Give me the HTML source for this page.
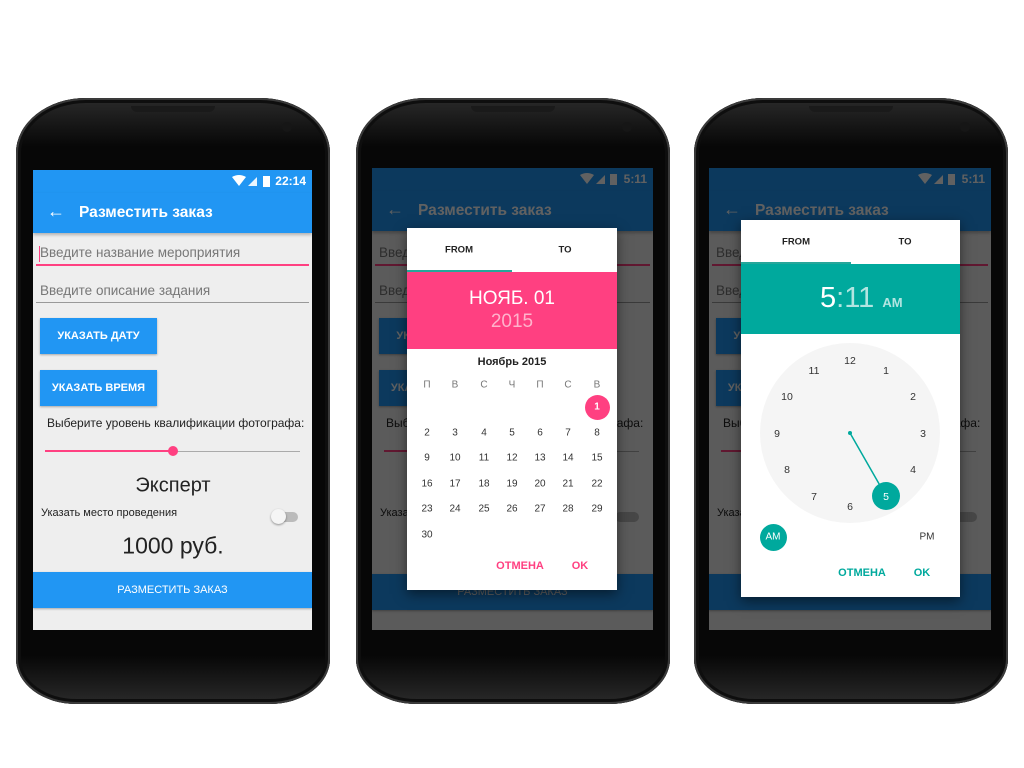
<!DOCTYPE html>
<html><head><meta charset="utf-8"><style>
*{margin:0;padding:0;box-sizing:border-box}
body{width:1024px;height:768px;background:#fff;position:relative;overflow:hidden;font-family:"Liberation Sans","DejaVu Sans",sans-serif}
.ph{position:absolute;top:98px;width:314px;height:606px;border-radius:70px 70px 60px 60px/55px 55px 45px 45px;background:linear-gradient(#2a2a2a,#070707 8%,#070707 92%,#2a2a2a);box-shadow:inset 0 0 0 2px #3a3a3a,inset 0 0 0 5px #0e0e0e}
.ph .grill{position:absolute;top:8px;left:115px;width:84px;height:6px;background:#1a1a1a;border-radius:0 0 6px 6px}
.ph .cam{position:absolute;top:24px;right:38px;width:10px;height:10px;border-radius:50%;background:#161616}
.sc{position:absolute;overflow:hidden;background:#eee}
.sb{position:absolute;left:0;top:0;right:0;height:23px;background:#1e8ee0}
.sb .t{position:absolute;right:6px;top:4px;color:#fff;font-size:12px;font-weight:bold}
.ab{position:absolute;left:0;top:23px;right:0;height:40px;background:#2196f3;box-shadow:0 2px 3px rgba(0,0,0,.25)}
.ab .ar{position:absolute;left:14px;top:8px;color:#fff;font-size:18px}
.ab .ti{position:absolute;left:46px;top:11px;color:#fff;font-size:15.5px;font-weight:bold}
.a{position:absolute;white-space:nowrap}
.btn{position:absolute;background:#2196f3;color:#fff;font-size:11px;font-weight:bold;text-align:center;box-shadow:0 1px 2px rgba(0,0,0,.3)}
.dim{position:absolute;left:0;top:0;width:300px;height:470px;background:rgba(0,0,0,.62);z-index:5}
.dlg{position:absolute;background:#fff;box-shadow:0 4px 12px rgba(0,0,0,.5);z-index:10}
.c{position:absolute;transform:translate(-50%,-50%);white-space:nowrap}
</style></head><body>

<!-- PHONE 1 -->
<div class="ph" style="left:16px"><div class="grill"></div><div class="cam"></div></div>
<div class="sc" style="left:33px;top:170px;width:279px;height:460px">
 <div class="sb" style="background:#2196f3"><svg style="position:absolute;left:199px;top:5px" width="40" height="13"><path d="M0 2 Q7 -2 14 2 L7 11Z" fill="#fff"/><path d="M16 11 L25 2 L25 11Z" fill="#fff" opacity=".9"/><rect x="31" y="1" width="7" height="11" fill="#fff"/></svg><div class="t">22:14</div></div>
 <div class="ab"><div class="ar">←</div><div class="ti">Разместить заказ</div></div>
 <div class="a" style="left:7px;top:75px;font-size:13.5px;color:#777">Введите название мероприятия</div>
 <div class="a" style="left:6px;top:76px;width:1px;height:16px;background:#ff4081"></div>
 <div class="a" style="left:3px;top:94px;width:273px;height:2px;background:#ff4081"></div>
 <div class="a" style="left:7px;top:113px;font-size:13.5px;color:#777">Введите описание задания</div>
 <div class="a" style="left:3px;top:132px;width:273px;height:1px;background:#999"></div>
 <div class="btn" style="left:7px;top:148px;width:117px;height:36px;line-height:36px">УКАЗАТЬ ДАТУ</div>
 <div class="btn" style="left:7px;top:200px;width:117px;height:36px;line-height:36px">УКАЗАТЬ ВРЕМЯ</div>
 <div class="a" style="left:14px;top:246px;font-size:12px;color:#222">Выберите уровень квалификации фотографа:</div>
 <div class="a" style="left:12px;top:280px;width:127px;height:2px;background:#ff4081"></div>
 <div class="a" style="left:139px;top:281px;width:128px;height:1px;background:#aaa"></div>
 <div class="a" style="left:135px;top:276px;width:10px;height:10px;border-radius:50%;background:#ff4081"></div>
 <div class="c" style="left:140px;top:316px;font-size:20px;color:#222">Эксперт</div>
 <div class="a" style="left:8px;top:337px;font-size:11px;color:#222">Указать место проведения</div>
 <div class="a" style="left:241px;top:342px;width:24px;height:10px;border-radius:5px;background:#bbb"></div>
 <div class="a" style="left:238px;top:339px;width:15px;height:15px;border-radius:50%;background:#f5f5f5;box-shadow:0 1px 2px rgba(0,0,0,.4)"></div>
 <div class="c" style="left:140px;top:376px;font-size:23px;color:#222">1000 руб.</div>
 <div class="btn" style="left:0;top:402px;width:279px;height:36px;line-height:36px;font-weight:normal">РАЗМЕСТИТЬ ЗАКАЗ</div>
</div>

<!-- PHONE 2 -->
<div class="ph" style="left:356px"><div class="grill"></div><div class="cam"></div></div>
<div class="sc" style="left:372px;top:168px;width:281px;height:462px">
 <div class="sb" style="background:#2196f3"><svg style="position:absolute;left:208px;top:5px" width="40" height="13"><path d="M0 2 Q7 -2 14 2 L7 11Z" fill="#fff"/><path d="M16 11 L25 2 L25 11Z" fill="#fff"/><rect x="30" y="1" width="7" height="11" fill="#fff"/></svg><div class="t">5:11</div></div>
 <div class="ab"><div class="ar">←</div><div class="ti">Разместить заказ</div></div>
 <div class="a" style="left:7px;top:77px;font-size:13.5px;color:#777">Введите название мероприятия</div>
 <div class="a" style="left:3px;top:96px;width:275px;height:2px;background:#ff4081"></div>
 <div class="a" style="left:7px;top:115px;font-size:13.5px;color:#777">Введите описание задания</div>
 <div class="a" style="left:3px;top:134px;width:275px;height:1px;background:#999"></div>
 <div class="btn" style="left:7px;top:150px;width:117px;height:36px;line-height:36px">УКАЗАТЬ ДАТУ</div>
 <div class="btn" style="left:7px;top:202px;width:117px;height:36px;line-height:36px">УКАЗАТЬ ВРЕМЯ</div>
 <div class="a" style="left:14px;top:248px;font-size:12px;color:#222">Выберите уровень квалификации фотографа:</div>
 <div class="a" style="left:12px;top:282px;width:127px;height:2px;background:#ff4081"></div>
 <div class="a" style="left:139px;top:283px;width:128px;height:1px;background:#aaa"></div>
 <div class="a" style="left:8px;top:339px;font-size:11px;color:#222">Указать место проведения</div>
 <div class="a" style="left:243px;top:344px;width:24px;height:10px;border-radius:5px;background:#bbb"></div>
 <div class="btn" style="left:0;top:406px;width:281px;height:36px;line-height:36px;font-weight:normal">РАЗМЕСТИТЬ ЗАКАЗ</div>
 <div class="dim"></div>
</div>
<div class="dlg" style="left:407px;top:228px;width:210px;height:362px">
 <div class="c" style="left:52px;top:22px;font-size:9.5px;font-weight:bold;color:#222">FROM</div>
 <div class="c" style="left:158px;top:22px;font-size:9.5px;font-weight:bold;color:#222">TO</div>
 <div class="a" style="left:0;top:42px;width:105px;height:2px;background:#26a69a"></div>
 <div class="a" style="left:0;top:44px;width:210px;height:77px;background:#ff4081"></div>
 <div class="c" style="left:105px;top:71px;font-size:19px;color:#fff">НОЯБ. 01</div>
 <div class="c" style="left:105px;top:94px;font-size:19px;color:#ffb3cc">2015</div>
 <div class="c" style="left:105px;top:134px;font-size:11px;font-weight:bold;color:#222">Ноябрь 2015</div>
 <div class="a" style="left:178px;top:167px;width:25px;height:25px;border-radius:50%;background:#ff4081"></div>
 <div class="c" style="left:113px;top:338px;font-size:11px;font-weight:bold;color:#ff4081">ОТМЕНА</div>
 <div class="c" style="left:173px;top:338px;font-size:11px;font-weight:bold;color:#ff4081">OK</div>
 <div style="position:absolute;left:0;top:0">
  <div class="c" style="left:20px;top:157px;font-size:10px;color:#777">П</div><div class="c" style="left:48px;top:157px;font-size:10px;color:#777">В</div><div class="c" style="left:77px;top:157px;font-size:10px;color:#777">С</div><div class="c" style="left:105px;top:157px;font-size:10px;color:#777">Ч</div><div class="c" style="left:133px;top:157px;font-size:10px;color:#777">П</div><div class="c" style="left:161px;top:157px;font-size:10px;color:#777">С</div><div class="c" style="left:190px;top:157px;font-size:10px;color:#777">В</div>
  <div class="c" style="left:190px;top:179px;font-size:10px;color:#fff;font-weight:bold">1</div>
  <div style="font-size:10px;color:#333">
  <div class="c" style="left:20px;top:205px">2</div><div class="c" style="left:48px;top:205px">3</div><div class="c" style="left:77px;top:205px">4</div><div class="c" style="left:105px;top:205px">5</div><div class="c" style="left:133px;top:205px">6</div><div class="c" style="left:161px;top:205px">7</div><div class="c" style="left:190px;top:205px">8</div>
  <div class="c" style="left:20px;top:230px">9</div><div class="c" style="left:48px;top:230px">10</div><div class="c" style="left:77px;top:230px">11</div><div class="c" style="left:105px;top:230px">12</div><div class="c" style="left:133px;top:230px">13</div><div class="c" style="left:161px;top:230px">14</div><div class="c" style="left:190px;top:230px">15</div>
  <div class="c" style="left:20px;top:256px">16</div><div class="c" style="left:48px;top:256px">17</div><div class="c" style="left:77px;top:256px">18</div><div class="c" style="left:105px;top:256px">19</div><div class="c" style="left:133px;top:256px">20</div><div class="c" style="left:161px;top:256px">21</div><div class="c" style="left:190px;top:256px">22</div>
  <div class="c" style="left:20px;top:281px">23</div><div class="c" style="left:48px;top:281px">24</div><div class="c" style="left:77px;top:281px">25</div><div class="c" style="left:105px;top:281px">26</div><div class="c" style="left:133px;top:281px">27</div><div class="c" style="left:161px;top:281px">28</div><div class="c" style="left:190px;top:281px">29</div>
  <div class="c" style="left:20px;top:307px">30</div>
  </div>
 </div>
</div>

<!-- PHONE 3 -->
<div class="ph" style="left:694px"><div class="grill"></div><div class="cam"></div></div>
<div class="sc" style="left:709px;top:168px;width:282px;height:462px">
 <div class="sb" style="background:#2196f3"><svg style="position:absolute;left:209px;top:5px" width="40" height="13"><path d="M0 2 Q7 -2 14 2 L7 11Z" fill="#fff"/><path d="M16 11 L25 2 L25 11Z" fill="#fff"/><rect x="30" y="1" width="7" height="11" fill="#fff"/></svg><div class="t">5:11</div></div>
 <div class="ab"><div class="ar">←</div><div class="ti">Разместить заказ</div></div>
 <div class="a" style="left:7px;top:77px;font-size:13.5px;color:#777">Введите название мероприятия</div>
 <div class="a" style="left:3px;top:96px;width:276px;height:2px;background:#ff4081"></div>
 <div class="a" style="left:7px;top:115px;font-size:13.5px;color:#777">Введите описание задания</div>
 <div class="a" style="left:3px;top:134px;width:276px;height:1px;background:#999"></div>
 <div class="btn" style="left:7px;top:150px;width:117px;height:36px;line-height:36px">УКАЗАТЬ ДАТУ</div>
 <div class="btn" style="left:7px;top:202px;width:117px;height:36px;line-height:36px">УКАЗАТЬ ВРЕМЯ</div>
 <div class="a" style="left:14px;top:248px;font-size:12px;color:#222">Выберите уровень квалификации фотографа:</div>
 <div class="a" style="left:12px;top:282px;width:127px;height:2px;background:#ff4081"></div>
 <div class="a" style="left:139px;top:283px;width:128px;height:1px;background:#aaa"></div>
 <div class="a" style="left:8px;top:339px;font-size:11px;color:#222">Указать место проведения</div>
 <div class="a" style="left:244px;top:344px;width:24px;height:10px;border-radius:5px;background:#bbb"></div>
 <div class="btn" style="left:0;top:406px;width:282px;height:36px;line-height:36px;font-weight:normal">РАЗМЕСТИТЬ ЗАКАЗ</div>
 <div class="dim"></div>
</div>
<div class="dlg" style="left:741px;top:220px;width:219px;height:377px">
 <div class="c" style="left:55px;top:22px;font-size:9.5px;font-weight:bold;color:#222">FROM</div>
 <div class="c" style="left:164px;top:22px;font-size:9.5px;font-weight:bold;color:#222">TO</div>
 <div class="a" style="left:0;top:42px;width:110px;height:2px;background:#26a69a"></div>
 <div class="a" style="left:0;top:44px;width:219px;height:70px;background:#00a99d"></div>
 <div class="a" style="left:79px;top:62px;font-size:29px;color:#fff">5<span style="color:#b2e5e1">:11</span> <span style="font-size:13px;color:#b2e5e1;font-weight:bold">AM</span></div>
 <svg style="position:absolute;left:0;top:114px" width="219" height="210">
  <circle cx="109" cy="99" r="90" fill="#f5f5f5"/>
  <line x1="109" y1="99" x2="145" y2="162" stroke="#00a99d" stroke-width="1.5"/>
  <circle cx="109" cy="99" r="2" fill="#00a99d"/>
  <circle cx="145" cy="162" r="14" fill="#00a99d"/>
 </svg>
 <div style="font-size:10.5px;color:#333">
  <div class="c" style="left:109px;top:141px">12</div><div class="c" style="left:145px;top:151px">1</div><div class="c" style="left:172px;top:177px">2</div><div class="c" style="left:182px;top:214px">3</div><div class="c" style="left:172px;top:250px">4</div>
  <div class="c" style="left:145px;top:277px;color:#fff">5</div><div class="c" style="left:109px;top:287px">6</div><div class="c" style="left:73px;top:277px">7</div><div class="c" style="left:46px;top:250px">8</div><div class="c" style="left:36px;top:214px">9</div><div class="c" style="left:46px;top:177px">10</div><div class="c" style="left:73px;top:151px">11</div>
 </div>
 <div class="a" style="left:19px;top:304px;width:27px;height:27px;border-radius:50%;background:#00a99d"></div>
 <div class="c" style="left:32px;top:317px;font-size:10px;color:#fff">AM</div>
 <div class="c" style="left:186px;top:317px;font-size:10px;color:#333">PM</div>
 <div class="c" style="left:121px;top:353px;font-size:11px;font-weight:bold;color:#00a99d">ОТМЕНА</div>
 <div class="c" style="left:181px;top:353px;font-size:11px;font-weight:bold;color:#00a99d">OK</div>
</div>
</body></html>
